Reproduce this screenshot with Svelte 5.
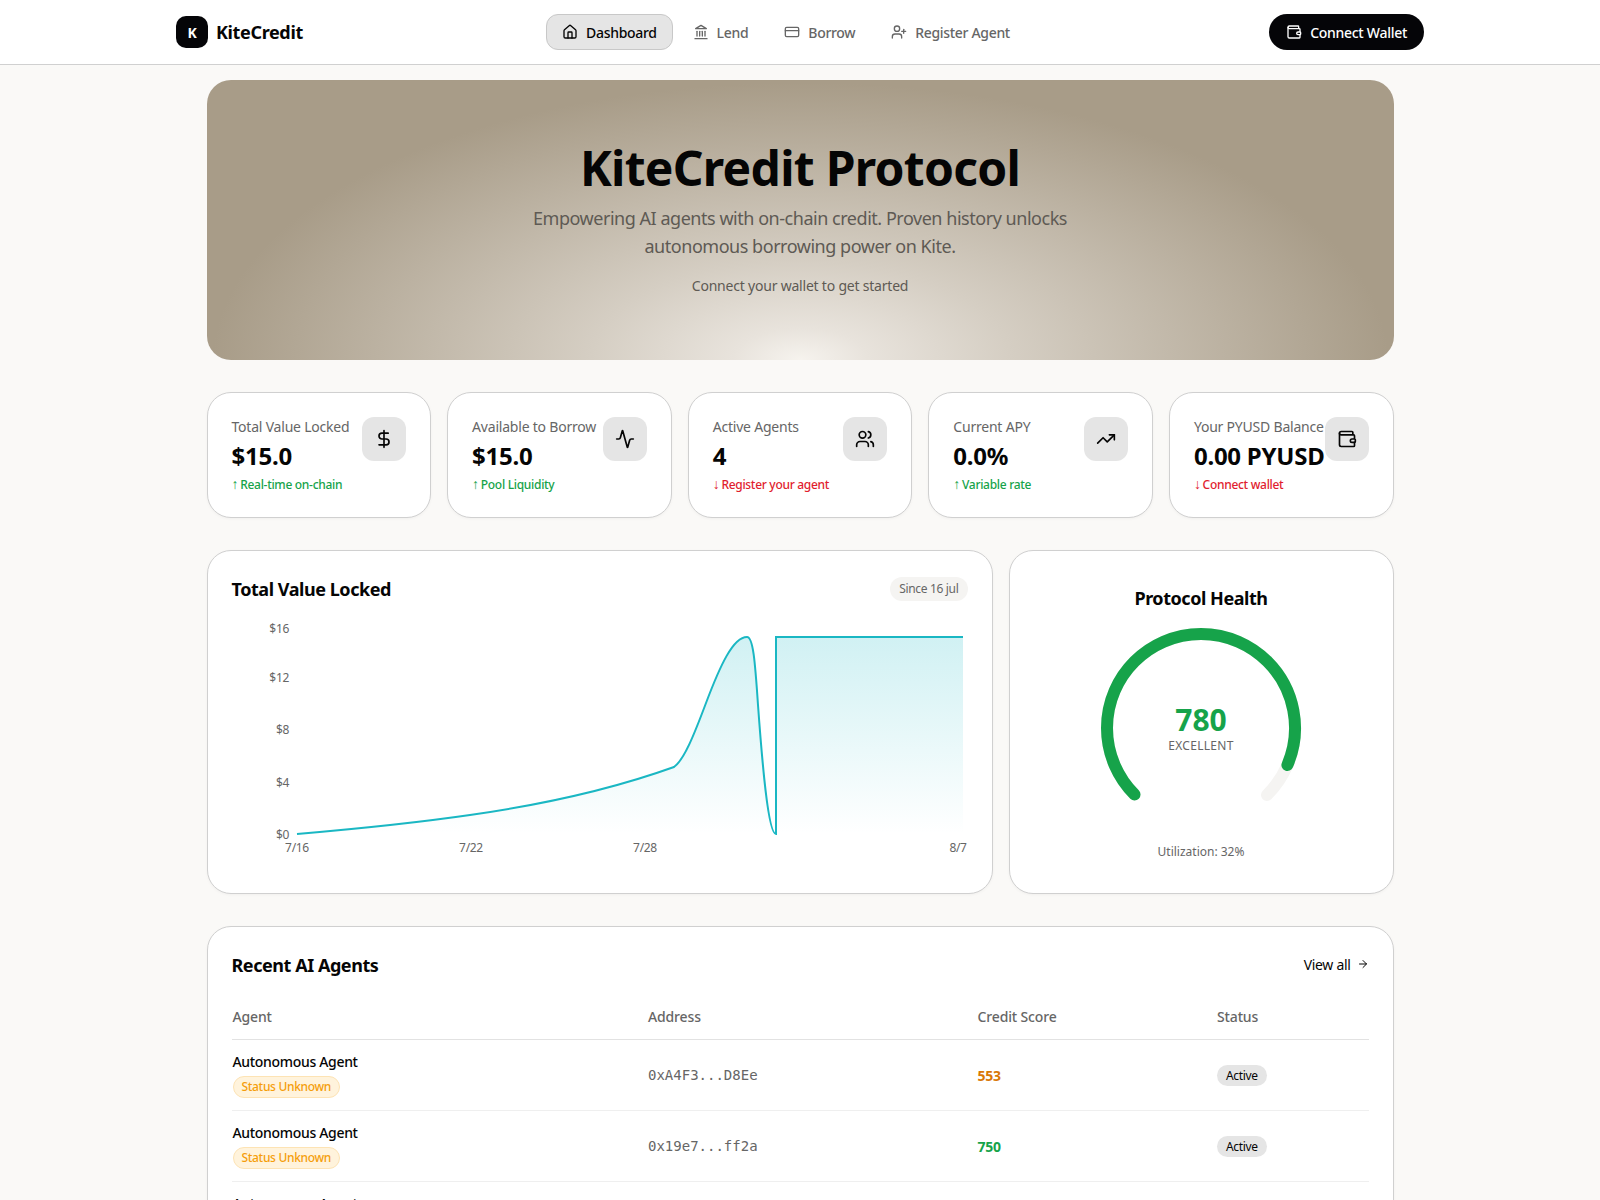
<script>
  const links = [
    { label: "Dashboard", icon: "home", active: true },
    { label: "Lend", icon: "landmark" },
    { label: "Borrow", icon: "card" },
    { label: "Register Agent", icon: "userplus" }
  ];

  const stats = [
    { label: "Total Value Locked", value: "$15.0", note: "Real-time on-chain", up: true, icon: "dollar" },
    { label: "Available to Borrow", value: "$15.0", note: "Pool Liquidity", up: true, icon: "activity" },
    { label: "Active Agents", value: "4", note: "Register your agent", up: false, icon: "users" },
    { label: "Current APY", value: "0.0%", note: "Variable rate", up: true, icon: "trending" },
    { label: "Your PYUSD Balance", value: "0.00 PYUSD", note: "Connect wallet", up: false, icon: "wallet" }
  ];

  const agents = [
    { address: "0xA4F3...D8Ee", score: 553, tone: "mid" },
    { address: "0x19e7...ff2a", score: 750, tone: "good" },
    { address: "0x7bC1...09aD", score: 610, tone: "mid" }
  ];

  const yTicks = [
    { label: "$16", y: 632.5 },
    { label: "$12", y: 681.5 },
    { label: "$8", y: 733.5 },
    { label: "$4", y: 786.5 },
    { label: "$0", y: 838.5 }
  ];
  const xTicks = [
    { label: "7/16", x: 297 },
    { label: "7/22", x: 471 },
    { label: "7/28", x: 645 },
    { label: "8/7", x: 958 }
  ];

  const curve =
    "M297 834C355 829 415 823 470 815C540 805 610 790 674 767C684 760 694 735 706 703C720 666 733 637 747 637C753 637 755 660 758 705C762 760 768 834 776 834";
  const flat = "L776 637L963 637";

  // gauge: 270 degree arc, score out of 850
  const score = 780;
  const r = 94;
  const arcLen = (2 * Math.PI * r * 270) / 360;
  const filled = (arcLen * score) / 850;
</script>

{#snippet icon(name)}
  <svg class="ic" viewBox="0 0 24 24" fill="none" stroke="currentColor" stroke-width="2" stroke-linecap="round" stroke-linejoin="round">
    {#if name === "home"}
      <path d="M15 21v-8a1 1 0 0 0-1-1h-4a1 1 0 0 0-1 1v8" />
      <path d="M3 10a2 2 0 0 1 .709-1.528l7-5.999a2 2 0 0 1 2.582 0l7 5.999A2 2 0 0 1 21 10v9a2 2 0 0 1-2 2H5a2 2 0 0 1-2-2z" />
    {:else if name === "landmark"}
      <line x1="3" x2="21" y1="22" y2="22" />
      <line x1="6" x2="6" y1="18" y2="11" />
      <line x1="10" x2="10" y1="18" y2="11" />
      <line x1="14" x2="14" y1="18" y2="11" />
      <line x1="18" x2="18" y1="18" y2="11" />
      <polygon points="12 2 20 7 4 7" />
    {:else if name === "card"}
      <rect width="20" height="14" x="2" y="5" rx="2" />
      <line x1="2" x2="22" y1="10" y2="10" />
    {:else if name === "userplus"}
      <path d="M16 21v-2a4 4 0 0 0-4-4H6a4 4 0 0 0-4 4v2" />
      <circle cx="9" cy="7" r="4" />
      <line x1="19" x2="19" y1="8" y2="14" />
      <line x1="22" x2="16" y1="11" y2="11" />
    {:else if name === "wallet"}
      <path d="M19 7V4a1 1 0 0 0-1-1H5a2 2 0 0 0 0 4h15a1 1 0 0 1 1 1v4h-3a2 2 0 0 0 0 4h3a1 1 0 0 0 1-1v-2a1 1 0 0 0-1-1" />
      <path d="M3 5v14a2 2 0 0 0 2 2h15a1 1 0 0 0 1-1v-4" />
    {:else if name === "dollar"}
      <line x1="12" x2="12" y1="2" y2="22" />
      <path d="M17 5H9.5a3.5 3.5 0 0 0 0 7h5a3.5 3.5 0 0 1 0 7H6" />
    {:else if name === "activity"}
      <path d="M22 12h-2.48a2 2 0 0 0-1.93 1.46l-2.35 8.36a.25.25 0 0 1-.48 0L9.24 2.18a.25.25 0 0 0-.48 0l-2.35 8.36A2 2 0 0 1 4.49 12H2" />
    {:else if name === "users"}
      <path d="M16 21v-2a4 4 0 0 0-4-4H6a4 4 0 0 0-4 4v2" />
      <circle cx="9" cy="7" r="4" />
      <path d="M22 21v-2a4 4 0 0 0-3-3.87" />
      <path d="M16 3.13a4 4 0 0 1 0 7.75" />
    {:else if name === "trending"}
      <polyline points="22 7 13.5 15.5 8.5 10.5 2 17" />
      <polyline points="16 7 22 7 22 13" />
    {:else if name === "arrow"}
      <path d="M5 12h14" />
      <path d="m12 5 7 7-7 7" />
    {/if}
  </svg>
{/snippet}

<div class="page">
  <header>
    <div class="bar">
      <div class="brand">
        <span class="logo">K</span>
        <span class="brand-name">KiteCredit</span>
      </div>
      <nav>
        {#each links as link}
          <a class="link" class:active={link.active} href="#top">
            {@render icon(link.icon)}
            {link.label}
          </a>
        {/each}
      </nav>
      <button class="connect">
        {@render icon("wallet")}
        Connect Wallet
      </button>
    </div>
  </header>

  <main>
    <section class="hero">
      <h1>KiteCredit Protocol</h1>
      <p class="lead">Empowering AI agents with on-chain credit. Proven history unlocks<br />autonomous borrowing power on Kite.</p>
      <p class="hint">Connect your wallet to get started</p>
    </section>

    <section class="stats">
      {#each stats as s}
        <div class="card stat">
          <div class="stat-text">
            <div class="stat-label">{s.label}</div>
            <div class="stat-value">{s.value}</div>
            <div class="stat-note" class:down={!s.up}>
              <span class="arrow">{s.up ? "↑" : "↓"}</span>{s.note}
            </div>
          </div>
          <div class="stat-icon">{@render icon(s.icon)}</div>
        </div>
      {/each}
    </section>

    <section class="charts">
      <div class="card chart-card">
        <div class="chart-head">
          <h2>Total Value Locked</h2>
          <span class="since">Since 16 jul</span>
        </div>
        <svg class="chart" viewBox="232 612 736 250">
          <defs>
            <linearGradient id="tvl" x1="0" y1="0" x2="0" y2="1">
              <stop offset="0%" stop-color="#17b8c4" stop-opacity="0.2" />
              <stop offset="100%" stop-color="#17b8c4" stop-opacity="0" />
            </linearGradient>
          </defs>
          {#each yTicks as t}
            <text class="tick" x="289" y={t.y} text-anchor="end">{t.label}</text>
          {/each}
          {#each xTicks as t}
            <text class="tick" x={t.x} y="851.5" text-anchor="middle">{t.label}</text>
          {/each}
          <path d="{curve}{flat}L963 834L297 834Z" fill="url(#tvl)" />
          <path d="{curve}{flat}" fill="none" stroke="#1ab7c3" stroke-width="2" />
        </svg>
      </div>

      <div class="card health">
        <h2>Protocol Health</h2>
        <div class="gauge">
          <svg width="212" height="212" viewBox="-106 -106 212 212">
            <g transform="rotate(135)" fill="none" stroke-linecap="round" stroke-width="12">
              <circle {r} stroke="#f5f4f2" stroke-dasharray="{arcLen} 1000" />
              <circle {r} stroke="#16a34a" stroke-dasharray="{filled} 1000" />
            </g>
          </svg>
          <div class="gauge-text">
            <div class="gauge-score">{score}</div>
            <div class="gauge-label">EXCELLENT</div>
          </div>
        </div>
        <p class="util">Utilization: 32%</p>
      </div>
    </section>

    <section class="card agents">
      <div class="agents-head">
        <h2>Recent AI Agents</h2>
        <a class="view-all" href="#top">View all {@render icon("arrow")}</a>
      </div>
      <table>
        <thead>
          <tr>
            <th class="c-agent">Agent</th>
            <th class="c-addr">Address</th>
            <th class="c-score">Credit Score</th>
            <th>Status</th>
          </tr>
        </thead>
        <tbody>
          {#each agents as a}
            <tr>
              <td>
                <div class="agent-name">Autonomous Agent</div>
                <span class="unknown">Status Unknown</span>
              </td>
              <td class="addr">{a.address}</td>
              <td class="score {a.tone}">{a.score}</td>
              <td><span class="active-pill">Active</span></td>
            </tr>
          {/each}
        </tbody>
      </table>
    </section>
  </main>
</div>

<style>
  :global(body) {
    background: #faf9f7;
    color: #050505;
    font-family: "Noto Sans", "Open Sans", sans-serif;
    letter-spacing: -0.02em;
  }
  .page {
    height: 100vh;
    overflow: hidden;
  }
  header {
    height: 64px;
    background: #fff;
    border-bottom: 1px solid #d0d0d0;
  }
  .bar {
    width: 1248px;
    height: 64px;
    margin: 0 auto;
    display: flex;
    align-items: center;
    justify-content: space-between;
  }
  .brand {
    display: flex;
    align-items: center;
    gap: 8px;
  }
  .logo {
    width: 32px;
    height: 32px;
    border-radius: 10px;
    background: #050508;
    color: #fff;
    font-size: 14px;
    font-weight: 700;
    display: flex;
    align-items: center;
    justify-content: center;
  }
  .brand-name {
    font-size: 18px;
    font-weight: 700;
    letter-spacing: -0.02em;
  }
  nav {
    display: flex;
    gap: 4px;
  }
  .link {
    display: flex;
    align-items: center;
    gap: 8px;
    height: 36px;
    box-sizing: border-box;
    padding: 0 15px;
    border: 1px solid transparent;
    border-radius: 12px;
    font-size: 14px;
    font-weight: 500;
    color: #666;
    text-decoration: none;
  }
  .link.active {
    background: #e5e5e5;
    border-color: #c8c8c8;
    color: #050505;
  }
  .ic {
    width: 16px;
    height: 16px;
    flex: none;
  }
  .connect {
    display: flex;
    align-items: center;
    gap: 8px;
    height: 36px;
    padding: 0 17px;
    border: 0;
    border-radius: 18px;
    background: #050508;
    color: #fff;
    font: inherit;
    font-size: 14px;
    font-weight: 500;
    letter-spacing: -0.02em;
  }
  main {
    width: 1187px;
    margin: 0 auto;
    padding-top: 15px;
    display: flex;
    flex-direction: column;
    gap: 32px;
  }
  .hero {
    height: 280px;
    box-sizing: border-box;
    padding-top: 58px;
    border-radius: 24px;
    text-align: center;
    background: radial-gradient(ellipse at 50% 100%, #f6f3ee 0%, #e8e3dc 8%, #d5cec3 25%, #a89c88 70%);
  }
  h1 {
    margin: 0;
    font-size: 48px;
    line-height: 60px;
    font-weight: 700;
    letter-spacing: -0.015em;
  }
  .lead {
    margin: 6px 0 0;
    font-size: 18px;
    line-height: 28px;
    letter-spacing: -0.026em;
    color: #5e5a54;
  }
  .hint {
    margin: 16px 0 0;
    font-size: 14px;
    line-height: 20px;
    letter-spacing: -0.015em;
    color: #5e5a54;
  }
  .card {
    box-sizing: border-box;
    background: #fff;
    border: 1px solid #d0d0d0;
    border-radius: 24px;
    box-shadow: 0 1px 3px rgba(0, 0, 0, 0.04);
  }
  .stats {
    display: grid;
    grid-template-columns: repeat(5, 1fr);
    gap: 16px;
  }
  .stat {
    min-width: 0;
    height: 126px;
    padding: 24px;
    display: flex;
    justify-content: space-between;
  }
  .stat-text {
    flex: 1;
    min-width: 0;
    white-space: nowrap;
  }
  .stat-label {
    font-size: 14px;
    line-height: 20px;
    letter-spacing: -0.015em;
    color: #666;
  }
  .stat-value {
    margin-top: 3px;
    font-size: 24px;
    line-height: 32px;
    font-weight: 700;
    letter-spacing: -0.01em;
  }
  .stat-note {
    margin-top: 5px;
    font-size: 12px;
    line-height: 16px;
    font-weight: 500;
    letter-spacing: -0.025em;
    color: #16a34a;
  }
  .stat-note.down {
    color: #e11d2e;
  }
  .arrow {
    margin-right: 2px;
    font-size: 14px;
    font-weight: 400;
    line-height: 1;
  }
  .stat-icon {
    width: 44px;
    height: 44px;
    flex: none;
    border-radius: 12px;
    background: #e5e5e5;
    display: flex;
    align-items: center;
    justify-content: center;
  }
  .stat-icon .ic {
    width: 20px;
    height: 20px;
  }
  .charts {
    display: grid;
    grid-template-columns: repeat(3, 1fr);
    gap: 16px;
  }
  .chart-card {
    grid-column: span 2;
    height: 344px;
    padding: 24px;
  }
  .chart-head {
    display: flex;
    align-items: center;
    justify-content: space-between;
    height: 28px;
    margin-bottom: 9px;
  }
  h2 {
    margin: 0;
    font-size: 18px;
    line-height: 28px;
    font-weight: 700;
    letter-spacing: -0.025em;
  }
  .since {
    padding: 0 9px;
    height: 24px;
    line-height: 24px;
    border-radius: 12px;
    background: #f5f4f2;
    font-size: 12px;
    color: #666;
  }
  .chart {
    display: block;
    width: 736px;
    height: 250px;
  }
  .tick {
    font-size: 12px;
    fill: #666;
  }
  .health {
    height: 344px;
    padding: 33px 24px 0;
    text-align: center;
  }
  .gauge {
    position: relative;
    width: 212px;
    height: 212px;
    margin: 10px auto 0;
  }
  .gauge svg {
    display: block;
  }
  .gauge-text {
    position: absolute;
    left: 0;
    right: 0;
    top: 80px;
  }
  .gauge-score {
    font-size: 30px;
    line-height: 36px;
    font-weight: 700;
    letter-spacing: 0;
    color: #16a34a;
  }
  .gauge-label {
    font-size: 12px;
    line-height: 16px;
    letter-spacing: 0.3px;
    color: #666;
  }
  .util {
    margin: 10px 0 0;
    font-size: 12px;
    line-height: 16px;
    letter-spacing: 0;
    color: #666;
  }
  .agents {
    padding: 24px;
  }
  .agents-head {
    display: flex;
    align-items: center;
    justify-content: space-between;
    height: 28px;
    margin-bottom: 28px;
  }
  .view-all {
    display: flex;
    align-items: center;
    gap: 6px;
    margin-top: -2px;
    font-size: 14px;
    color: #050505;
    text-decoration: none;
  }
  .view-all .ic {
    width: 12px;
    height: 12px;
  }
  table {
    width: 100%;
    border-collapse: collapse;
    table-layout: fixed;
  }
  th {
    padding: 0 1px 12px;
    height: 20px;
    text-align: left;
    font-size: 14px;
    line-height: 20px;
    font-weight: 500;
    letter-spacing: -0.01em;
    color: #666;
    border-bottom: 1px solid #e2e2e2;
  }
  .c-agent {
    width: 413.5px;
  }
  .c-addr {
    width: 327.5px;
  }
  .c-score {
    width: 237.5px;
  }
  td {
    height: 71px;
    padding: 0 1px;
    box-sizing: border-box;
    font-size: 14px;
    border-bottom: 1px solid #efefef;
    vertical-align: middle;
  }
  .agent-name {
    line-height: 20px;
    font-weight: 500;
  }
  .unknown {
    display: inline-block;
    margin-top: 4px;
    padding: 0 8px;
    height: 20px;
    line-height: 20px;
    border: 1px solid #fde3b4;
    border-radius: 11px;
    background: #fff3dc;
    color: #f59e0b;
    font-size: 12px;
    font-weight: 500;
  }
  .addr {
    font-family: "DejaVu Sans Mono", monospace;
    font-size: 14px;
    letter-spacing: 0;
    color: #666;
  }
  .score {
    font-weight: 700;
  }
  .score.mid {
    color: #d97706;
  }
  .score.good {
    color: #16a34a;
  }
  .active-pill {
    display: inline-block;
    padding: 0 9px;
    height: 21px;
    line-height: 21px;
    border-radius: 11px;
    background: #e5e5e5;
    font-size: 12px;
  }
</style>
